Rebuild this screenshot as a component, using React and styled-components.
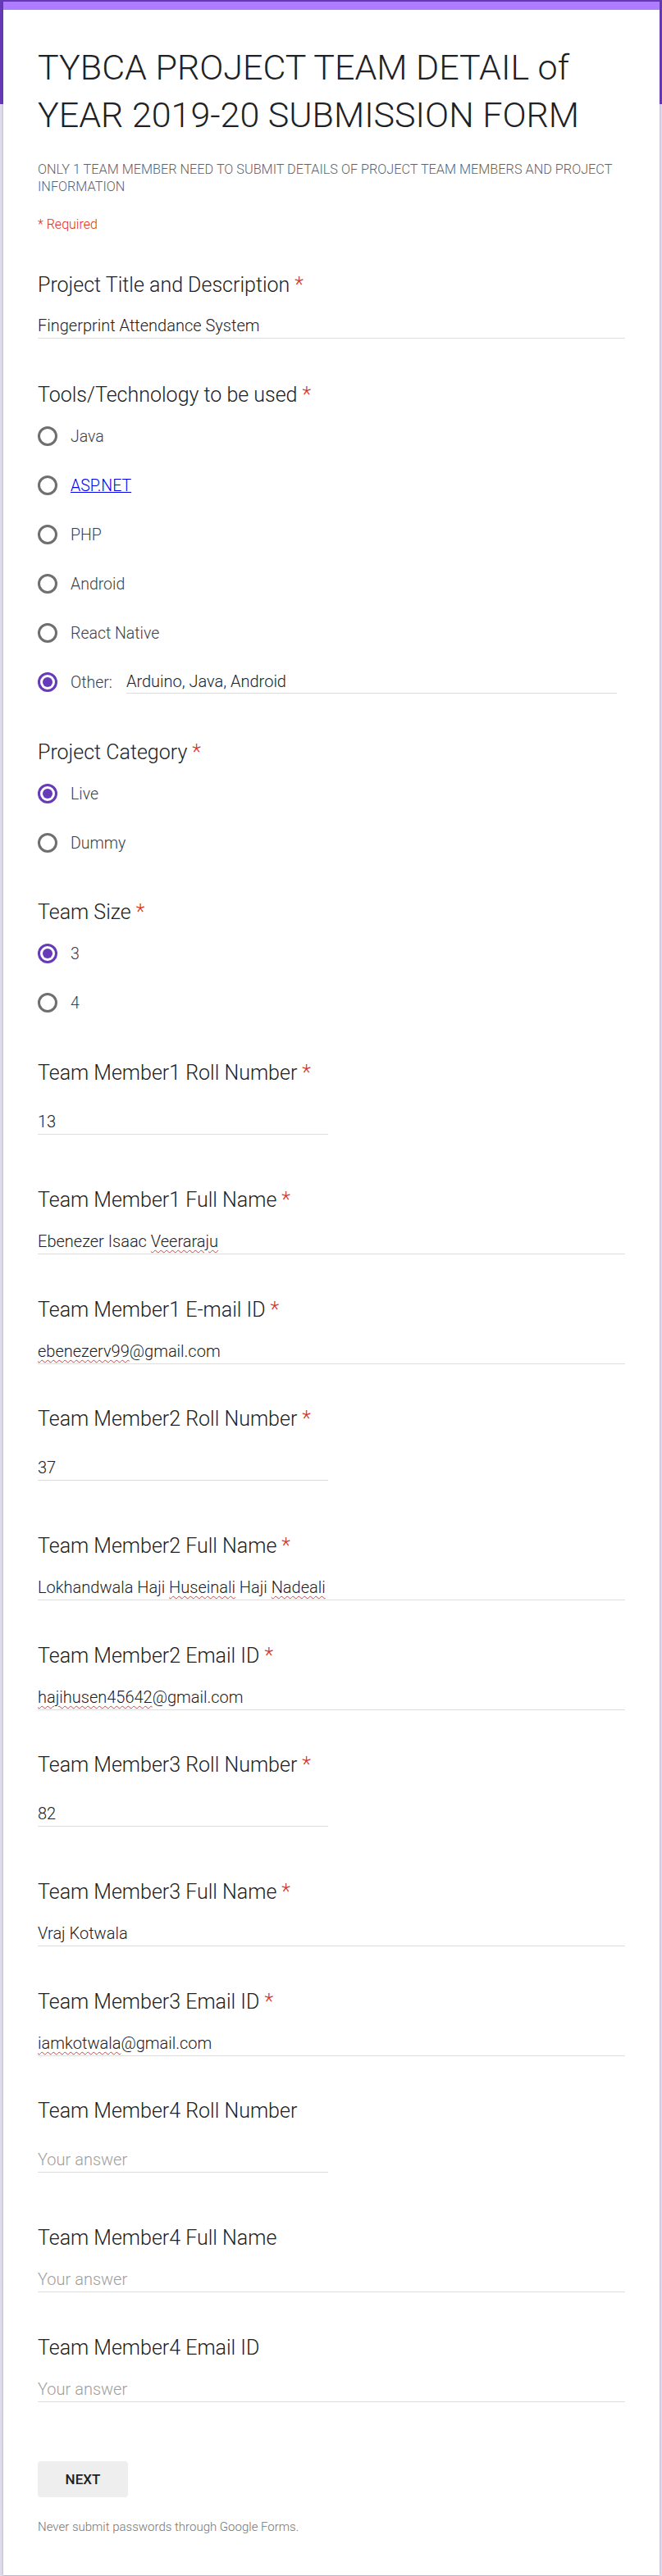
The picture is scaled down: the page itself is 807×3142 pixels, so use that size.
import React from 'react';
import styled, { createGlobalStyle } from 'styled-components';

const GlobalStyle = createGlobalStyle`
  body {
    margin: 0;
    font-family: Roboto, "Liberation Sans", Arial, sans-serif;
    background: #e2dded;
  }
`;

const Page = styled.div`
  min-height: 3142px;
  box-sizing: border-box;
  padding: 2px 3px 3px 4px;
  background: linear-gradient(#673ab7 0, #673ab7 127px, #e2dded 127px);
`;

const Card = styled.div`
  width: 800px;
  box-sizing: border-box;
  background: #fff;
  border-top: 10px solid #ae7cff;
  box-shadow: 0 1px 3px rgba(60, 40, 100, 0.35);
  padding: 0 42px 49px 42px;
`;

const Header = styled.div`
  padding-top: 41px;
`;

const Title = styled.h1`
  margin: 0;
  font-size: 43px;
  line-height: 58px;
  font-weight: 300;
  color: #202124;
`;

const Description = styled.p`
  margin: 27px 0 0;
  font-size: 16.25px;
  line-height: 21px;
  font-weight: 300;
  color: #5f6368;
`;

const Required = styled.div`
  margin-top: 26px;
  font-size: 16px;
  line-height: 20px;
  font-weight: 300;
  color: #d93025;
`;

const Questions = styled.div`
  margin-top: 48px;
`;

const Question = styled.div`
  margin-bottom: ${p => p.$after}px;
`;

const QTitle = styled.div`
  font-size: 25px;
  line-height: 32px;
  font-weight: 300;
  color: #202124;
`;

const Star = styled.span`
  color: #d93025;
  margin-left: 6px;
`;

const Answer = styled.div`
  margin-top: ${p => p.$gap}px;
  width: ${p => (p.$short ? '354px' : '100%')};
  box-sizing: border-box;
  font-size: 20px;
  line-height: 24px;
  font-weight: 300;
  color: ${p => (p.$empty ? '#9e9e9e' : '#202124')};
  padding-bottom: 3px;
  border-bottom: 1px solid #dedede;
`;

const Typo = styled.span`
  text-decoration: underline wavy #e53935;
  text-decoration-thickness: 1px;
  text-underline-offset: 3px;
`;

const Options = styled.div`
  margin-top: 4px;
  display: flex;
  flex-direction: column;
`;

const OptionRow = styled.div`
  height: 60px;
  display: flex;
  align-items: center;
`;

const Radio = styled.span`
  width: 24px;
  height: 24px;
  flex: none;
  box-sizing: border-box;
  border-radius: 50%;
  border: 3px solid ${p => (p.$checked ? '#673ab7' : '#6f6f6f')};
  display: flex;
  align-items: center;
  justify-content: center;

  &::after {
    content: '';
    display: ${p => (p.$checked ? 'block' : 'none')};
    width: 12px;
    height: 12px;
    border-radius: 50%;
    background: #673ab7;
  }
`;

const OptionLabel = styled.span`
  margin-left: 16px;
  font-size: 19.5px;
  font-weight: 300;
  color: #3c4043;
`;

const LinkLabel = styled.a`
  color: #0000ee;
  text-decoration: underline;
`;

const OtherInput = styled.div`
  flex: 1;
  margin-left: 17px;
  margin-right: 10px;
  font-size: 20px;
  line-height: 24px;
  font-weight: 300;
  color: #202124;
  padding-bottom: 2px;
  border-bottom: 1px solid #dedede;
`;

const NextButton = styled.button`
  margin-top: 72px;
  width: 110px;
  height: 44px;
  border: none;
  border-radius: 4px;
  background: #eeeeee;
  font-family: Roboto, "Liberation Sans", Arial, sans-serif;
  font-size: 17px;
  font-weight: 500;
  color: #202124;
  display: block;
`;

const Footer = styled.div`
  margin-top: 26px;
  font-size: 15px;
  line-height: 20px;
  font-weight: 300;
  color: #757575;
`;

const RadioQuestion = ({ title, options, after }) => (
  <Question $after={after}>
    <QTitle>
      {title}
      <Star>*</Star>
    </QTitle>
    <Options>
      {options.map((o, i) => (
        <OptionRow key={i}>
          <Radio $checked={o.checked} />
          <OptionLabel>
            {o.link ? <LinkLabel href="#">{o.label}</LinkLabel> : o.label}
          </OptionLabel>
          {o.other && <OtherInput>{o.other}</OtherInput>}
        </OptionRow>
      ))}
    </Options>
  </Question>
);

const TextQuestion = ({ title, required, value, short, gap, after }) => (
  <Question $after={after}>
    <QTitle>
      {title}
      {required && <Star>*</Star>}
    </QTitle>
    <Answer $gap={gap} $short={short} $empty={!value}>
      {value || 'Your answer'}
    </Answer>
  </Question>
);

const members = [
  {
    n: 1,
    roll: '13',
    name: (
      <>
        Ebenezer Isaac <Typo>Veeraraju</Typo>
      </>
    ),
    mailLabel: 'E-mail ID',
    mail: (
      <>
        <Typo>ebenezerv99</Typo>@gmail.com
      </>
    )
  },
  {
    n: 2,
    roll: '37',
    name: (
      <>
        Lokhandwala Haji <Typo>Huseinali</Typo> Haji <Typo>Nadeali</Typo>
      </>
    ),
    mailLabel: 'Email ID',
    mail: (
      <>
        <Typo>hajihusen45642</Typo>@gmail.com
      </>
    )
  },
  {
    n: 3,
    roll: '82',
    name: 'Vraj Kotwala',
    mailLabel: 'Email ID',
    mail: (
      <>
        <Typo>iamkotwala</Typo>@gmail.com
      </>
    )
  },
  { n: 4, roll: null, name: null, mailLabel: 'Email ID', mail: null, optional: true }
];

const App = () => (
  <Page>
    <GlobalStyle />
    <Card>
      <Header>
        <Title>TYBCA PROJECT TEAM DETAIL of YEAR 2019-20 SUBMISSION FORM</Title>
        <Description>
          ONLY 1 TEAM MEMBER NEED TO SUBMIT DETAILS OF PROJECT TEAM MEMBERS AND PROJECT
          INFORMATION
        </Description>
        <Required>* Required</Required>
      </Header>
      <Questions>
        <TextQuestion
          title="Project Title and Description"
          required
          value="Fingerprint Attendance System"
          gap={21}
          after={53}
        />
        <RadioQuestion
          title="Tools/Technology to be used"
          after={40}
          options={[
            { label: 'Java' },
            { label: 'ASP.NET', link: true },
            { label: 'PHP' },
            { label: 'Android' },
            { label: 'React Native' },
            { label: 'Other:', checked: true, other: 'Arduino, Java, Android' }
          ]}
        />
        <RadioQuestion
          title="Project Category"
          after={39}
          options={[{ label: 'Live', checked: true }, { label: 'Dummy' }]}
        />
        <RadioQuestion
          title="Team Size"
          after={40}
          options={[{ label: '3', checked: true }, { label: '4' }]}
        />
        {members.map(m => (
          <React.Fragment key={m.n}>
            <TextQuestion
              title={`Team Member${m.n} Roll Number`}
              required={!m.optional}
              value={m.roll}
              short
              gap={31}
              after={64}
            />
            <TextQuestion
              title={`Team Member${m.n} Full Name`}
              required={!m.optional}
              value={m.name}
              gap={22}
              after={52}
            />
            <TextQuestion
              title={`Team Member${m.n} ${m.mailLabel}`}
              required={!m.optional}
              value={m.mail}
              gap={22}
              after={m.optional ? 0 : 51}
            />
          </React.Fragment>
        ))}
      </Questions>
      <NextButton>NEXT</NextButton>
      <Footer>Never submit passwords through Google Forms.</Footer>
    </Card>
  </Page>
);

export default App;
